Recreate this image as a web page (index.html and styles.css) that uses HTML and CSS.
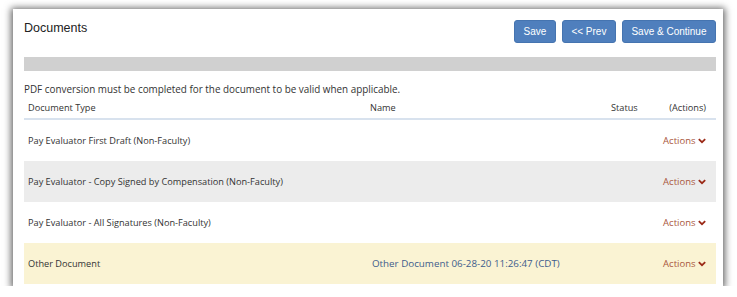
FILE: index.html
```html
<!DOCTYPE html>
<html>
<head>
<meta charset="utf-8">
<link rel="stylesheet" href="styles.css">
</head>
<body>
<div class="card">
  <div class="head">
    <h1 class="title">Documents</h1>
    <div class="btns">
      <button class="btn">Save</button>
      <button class="btn">&lt;&lt; Prev</button>
      <button class="btn">Save &amp; Continue</button>
    </div>
  </div>
  <div class="bar"></div>
  <p class="note">PDF conversion must be completed for the document to be valid when applicable.</p>
  <div class="table">
    <div class="row hdr">
      <div class="c1">Document Type</div>
      <div class="c2">Name</div>
      <div class="c3">Status</div>
      <div class="c4">(Actions)</div>
    </div>
    <div class="row">
      <div class="c1">Pay Evaluator First Draft (Non-Faculty)</div>
      <div class="c2"></div>
      <div class="c3"></div>
      <div class="c4"><span class="act">Actions <svg class="chev" viewBox="0 0 10 7" width="8" height="6"><path d="M1 1.2 L5 5 L9 1.2" fill="none" stroke="#9b2a17" stroke-width="2.2"/></svg></span></div>
    </div>
    <div class="row alt">
      <div class="c1">Pay Evaluator - Copy Signed by Compensation (Non-Faculty)</div>
      <div class="c2"></div>
      <div class="c3"></div>
      <div class="c4"><span class="act">Actions <svg class="chev" viewBox="0 0 10 7" width="8" height="6"><path d="M1 1.2 L5 5 L9 1.2" fill="none" stroke="#9b2a17" stroke-width="2.2"/></svg></span></div>
    </div>
    <div class="row">
      <div class="c1">Pay Evaluator - All Signatures (Non-Faculty)</div>
      <div class="c2"></div>
      <div class="c3"></div>
      <div class="c4"><span class="act">Actions <svg class="chev" viewBox="0 0 10 7" width="8" height="6"><path d="M1 1.2 L5 5 L9 1.2" fill="none" stroke="#9b2a17" stroke-width="2.2"/></svg></span></div>
    </div>
    <div class="row hl">
      <div class="c1">Other Document</div>
      <div class="c2"><a class="link">Other Document 06-28-20 11:26:47 (CDT)</a></div>
      <div class="c3"></div>
      <div class="c4"><span class="act">Actions <svg class="chev" viewBox="0 0 10 7" width="8" height="6"><path d="M1 1.2 L5 5 L9 1.2" fill="none" stroke="#9b2a17" stroke-width="2.2"/></svg></span></div>
    </div>
  </div>
</div>
</body>
</html>
```
FILE: styles.css
```css
html, body {
  margin: 0;
  padding: 0;
  background: #ffffff;
}
body {
  padding: 9px 0 0 13px;
}
.card {
  width: 710px;
  height: 277px;
  box-sizing: border-box;
  background: #fff;
  box-shadow: 0 1px 7px 2px rgba(0,0,0,0.6);
  padding: 11px 7px 0 11px;
  overflow: hidden;
}
.head {
  display: flex;
  justify-content: space-between;
  align-items: flex-start;
  height: 23px;
}
.title {
  margin: 0;
  padding-top: 1px;
  font: 12.5px/14px "Liberation Sans", Arial, sans-serif;
  color: #222;
  font-weight: normal;
}
.btns {
  display: flex;
  gap: 6px;
}
.btn {
  height: 23px;
  box-sizing: border-box;
  padding: 0 8.5px;
  background: #4f7fbd;
  border: 1px solid #4574b0;
  border-radius: 3px;
  color: #fff;
  font: 10px/21px "Liberation Sans", Arial, sans-serif;
}
.bar {
  margin-top: 14px;
  height: 14px;
  background: #d0d0d0;
}
.note {
  margin: 11px 0 0 0;
  font: 9.9px/14px "Open Sans", sans-serif;
  color: #333;
}
.row {
  display: grid;
  grid-template-columns: 342px 241px 50px 59px;
  height: 41px;
  align-items: center;
  font: 9.2px/14px "Open Sans", sans-serif;
  color: #333;
}
.row > div {
  padding-left: 4px;
}
.row .c4 {
  text-align: right;
  padding-right: 10px;
  padding-left: 0;
}
.row.hdr {
  height: 24px;
  align-items: start;
  padding-top: 5px;
  box-sizing: border-box;
  border-bottom: 2px solid #d8e2ee;
}
.row.alt { background: #ececec; }
.row.hl { background: #faf3d3; }
.act {
  color: #a9573d;
  font-size: 9.5px;
  white-space: nowrap;
}
.link {
  color: #3e5c8c;
  font-size: 9.8px;
  text-decoration: none;
  padding-left: 2px;
}
```
